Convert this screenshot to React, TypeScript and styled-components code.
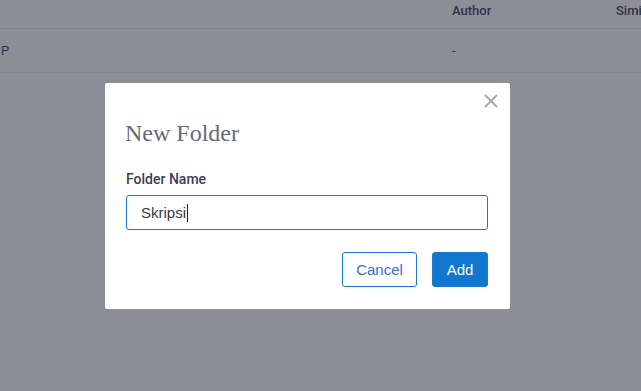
import React from "react";
import styled, { createGlobalStyle } from "styled-components";

const Global = createGlobalStyle`
  html, body { margin: 0; padding: 0; }
  body { background: #ffffff; font-family: Roboto, "Liberation Sans", Arial, sans-serif; overflow: hidden; }
`;

const Page = styled.div`
  width: 641px;
  height: 391px;
  background: #ffffff;
  overflow: hidden;
`;

const Table = styled.div`
  display: grid;
  grid-template-columns: 452px 164px 60px;
  width: 676px;
`;

const HeadCell = styled.div`
  height: 29px;
  box-sizing: border-box;
  padding-top: 3px;
  font-size: 13px;
  font-weight: 500;
  color: #3b4252;
  border-bottom: 1px solid #e8e9ec;
  white-space: nowrap;
`;

const Cell = styled.div<{ $pad?: number }>`
  height: 44px;
  box-sizing: border-box;
  padding-top: 14px;
  padding-left: ${(p) => p.$pad ?? 0}px;
  font-size: 13px;
  color: #3b4252;
  border-bottom: 1px solid #e8e9ec;
  white-space: nowrap;
`;

const Overlay = styled.div`
  position: fixed;
  inset: 0;
  background: rgba(34, 41, 58, 0.52);
  padding: 83px 0 0 105px;
  box-sizing: border-box;
`;

const Dialog = styled.div`
  position: relative;
  width: 405px;
  height: 226px;
  background: #ffffff;
  border-radius: 2px;
  box-sizing: border-box;
  padding: 36px 22px 0 20px;
`;

const Close = styled.button`
  position: absolute;
  top: 10px;
  right: 11px;
  width: 16px;
  height: 16px;
  padding: 0;
  border: 0;
  background: transparent;
  display: flex;
  align-items: center;
  justify-content: center;
`;

const Title = styled.h2`
  margin: 0;
  font-family: "Liberation Serif", "Times New Roman", serif;
  font-weight: 400;
  font-size: 24px;
  line-height: 28px;
  color: #666a73;
`;

const Label = styled.label`
  display: block;
  margin: 24px 0 0 1px;
  font-size: 14px;
  font-weight: 500;
  line-height: 17px;
  color: #3b4150;
`;

const Input = styled.div`
  margin: 7px 0 0 1px;
  height: 35px;
  box-sizing: border-box;
  border: 1px solid #1a78cf;
  border-radius: 3px;
  padding: 0 14px;
  display: flex;
  align-items: center;
  font-family: "Liberation Sans", Arial, sans-serif;
  font-size: 15px;
  color: #333a48;
`;

const Caret = styled.span`
  display: inline-block;
  width: 1px;
  height: 18px;
  background: #222;
  margin-left: 1px;
`;

const Actions = styled.div`
  display: flex;
  justify-content: flex-end;
  gap: 15px;
  margin-top: 22px;
`;

const Btn = styled.button<{ $primary?: boolean }>`
  height: 35px;
  box-sizing: border-box;
  border-radius: 3px;
  font-family: "Liberation Sans", Arial, sans-serif;
  font-size: 15px;
  padding: 0;
  border: 1px solid #1a78cf;
  background: ${(p) => (p.$primary ? "#1177d1" : "#ffffff")};
  color: ${(p) => (p.$primary ? "#ffffff" : "#3a70c9")};
  width: ${(p) => (p.$primary ? 56 : 75)}px;
`;

export default function App() {
  return (
    <Page>
      <Global />
      <Table>
        <HeadCell />
        <HeadCell>Author</HeadCell>
        <HeadCell>Similarity</HeadCell>
        <Cell $pad={1}>P</Cell>
        <Cell>-</Cell>
        <Cell />
      </Table>
      <Overlay>
        <Dialog>
          <Close aria-label="Close">
            <svg width="14" height="14" viewBox="0 0 14 14">
              <path d="M1 1L13 13M13 1L1 13" stroke="#a3a6ad" strokeWidth="1.8" />
            </svg>
          </Close>
          <Title>New Folder</Title>
          <Label>Folder Name</Label>
          <Input>
            Skripsi
            <Caret />
          </Input>
          <Actions>
            <Btn>Cancel</Btn>
            <Btn $primary>Add</Btn>
          </Actions>
        </Dialog>
      </Overlay>
    </Page>
  );
}
